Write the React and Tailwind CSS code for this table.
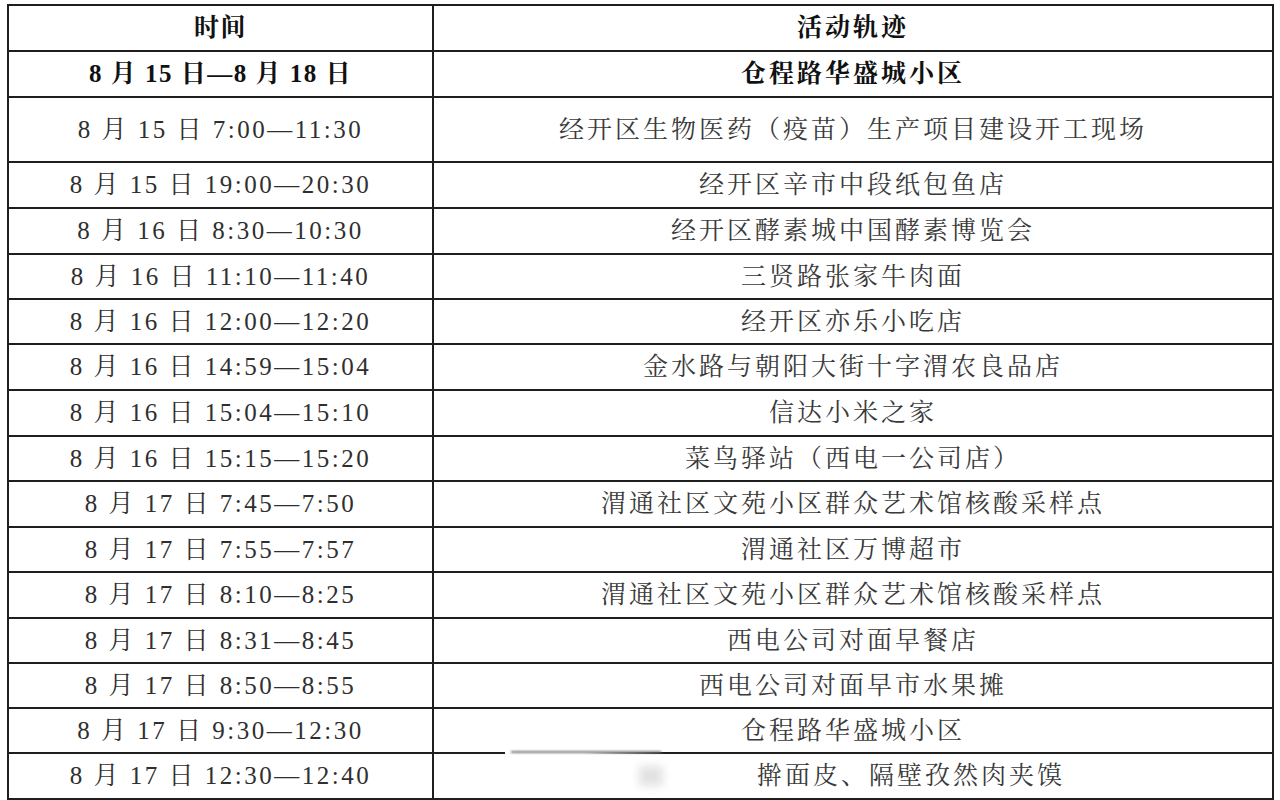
import React from 'react';

const rows = [
  { h: 46, time: '时间', place: '活动轨迹', bold: true },
  { h: 46, time: '8 月 15 日—8 月 18 日', place: '仓程路华盛城小区', bold: true },
  { h: 65, time: '8 月 15 日 7:00—11:30', place: '经开区生物医药（疫苗）生产项目建设开工现场' },
  { h: 46, time: '8 月 15 日 19:00—20:30', place: '经开区辛市中段纸包鱼店' },
  { h: 46, time: '8 月 16 日 8:30—10:30', place: '经开区酵素城中国酵素博览会' },
  { h: 45, time: '8 月 16 日 11:10—11:40', place: '三贤路张家牛肉面' },
  { h: 45, time: '8 月 16 日 12:00—12:20', place: '经开区亦乐小吃店' },
  { h: 46, time: '8 月 16 日 14:59—15:04', place: '金水路与朝阳大街十字渭农良品店' },
  { h: 46, time: '8 月 16 日 15:04—15:10', place: '信达小米之家' },
  { h: 45, time: '8 月 16 日 15:15—15:20', place: '菜鸟驿站（西电一公司店）' },
  { h: 46, time: '8 月 17 日 7:45—7:50', place: '渭通社区文苑小区群众艺术馆核酸采样点' },
  { h: 45, time: '8 月 17 日 7:55—7:57', place: '渭通社区万博超市' },
  { h: 46, time: '8 月 17 日 8:10—8:25', place: '渭通社区文苑小区群众艺术馆核酸采样点' },
  { h: 45, time: '8 月 17 日 8:31—8:45', place: '西电公司对面早餐店' },
  { h: 45, time: '8 月 17 日 8:50—8:55', place: '西电公司对面早市水果摊' },
  { h: 45, time: '8 月 17 日 9:30—12:30', place: '仓程路华盛城小区' },
  { h: 46, time: '8 月 17 日 12:30—12:40', place: '擀面皮、隔壁孜然肉夹馍', hidden: true },
];

const font = { fontFamily: '"Liberation Serif", "Noto Serif CJK SC", "Noto Sans CJK SC", serif' };

export default function App() {
  return (
    <div className="w-[1280px] h-[800px] bg-white overflow-hidden pl-[7px] pt-[4px]" style={font}>
      <div className="w-[1267px] border-t-2 border-l-2 border-r-2 border-[#1e1e1e]">
        {rows.map((r, i) => (
          <div
            key={i}
            className="flex border-b-2 border-[#1e1e1e]"
            style={{ height: r.h }}
          >
            <div
              className={`w-[425px] shrink-0 border-r-2 border-[#1e1e1e] flex items-center justify-center text-[25px] ${
                r.bold ? 'font-bold text-[#111] tracking-[1.5px]' : 'text-[#2f2f2f] tracking-[2.5px]'
              }`}
            >
              {r.time}
            </div>
            <div
              className={`relative flex-1 flex items-center justify-center text-[25px] tracking-[3px] ${
                r.bold ? 'font-bold text-[#111]' : 'text-[#3a3a3a]'
              } ${r.hidden ? 'pl-[116px]' : ''}`}
            >
              {r.place}
              {r.hidden && (
                <div className="absolute left-[71px] top-[-4px] w-[160px] h-[48px]">
                  <div className="absolute inset-0 bg-gradient-to-r from-white via-white to-transparent" />
                  <div className="absolute left-[6px] top-[1px] w-[150px] h-[2px] bg-[#6f6472] blur-[1px] opacity-90" />
                  <div className="absolute right-[2px] top-[16px] w-[24px] h-[20px] bg-[#cfcfcf] blur-[4px] opacity-60" />
                </div>
              )}
            </div>
          </div>
        ))}
      </div>
    </div>
  );
}
